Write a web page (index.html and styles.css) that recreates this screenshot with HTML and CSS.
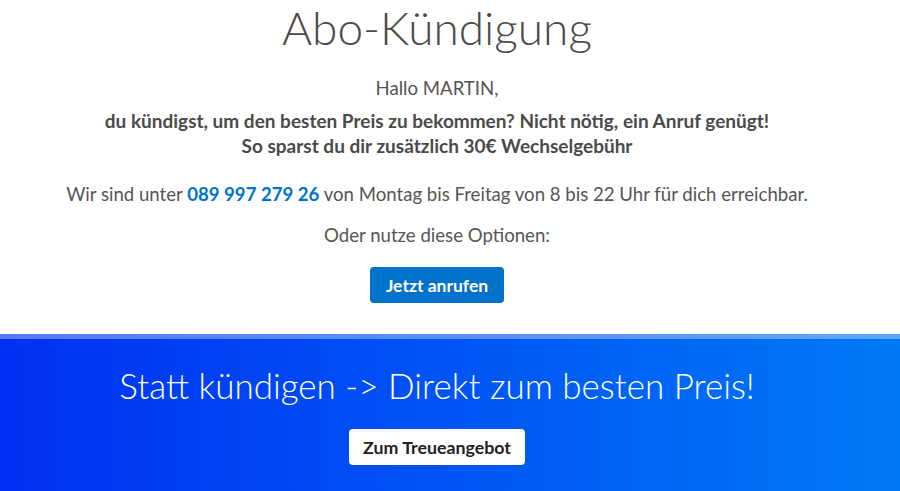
FILE: index.html
```html
<!DOCTYPE html>
<html lang="de">
<head>
<meta charset="utf-8">
<title>Abo-Kündigung</title>
<link rel="stylesheet" href="styles.css">
</head>
<body>
<main class="page">
  <section class="intro">
    <h1 class="title">Abo-Kündigung</h1>
    <p class="greeting">Hallo MARTIN,</p>
    <p class="pitch">du kündigst, um den besten Preis zu bekommen? Nicht nötig, ein Anruf genügt!<br>So sparst du dir zusätzlich 30€ Wechselgebühr</p>
    <p class="hours">Wir sind unter <a class="phone" href="#">089 997 279 26</a> von Montag bis Freitag von 8 bis 22 Uhr für dich erreichbar.</p>
    <p class="options">Oder nutze diese Optionen:</p>
    <a class="btn btn-primary" href="#">Jetzt anrufen</a>
  </section>
  <section class="offer">
    <h2 class="offer-title">Statt kündigen -&gt; Direkt zum besten Preis!</h2>
    <a class="btn btn-white" href="#">Zum Treueangebot</a>
  </section>
</main>
</body>
</html>
```
FILE: styles.css
```css
html, body {
  margin: 0;
  padding: 0;
  background: #ffffff;
}
body {
  font-family: Lato, "Open Sans", sans-serif;
  color: #4a4a4a;
}
.page {
  display: flex;
  flex-direction: column;
  min-height: 491px;
}
.intro {
  display: flex;
  flex-direction: column;
  align-items: center;
  text-align: center;
  padding: 0 26px 31px 0;
}
.title {
  margin: 0;
  font-size: 46px;
  font-weight: 300;
  line-height: 56px;
  color: #4a4a4a;
}
.greeting {
  margin: 20px 0 0;
  font-size: 18.6px;
  font-weight: 400;
  line-height: 24px;
  color: #555555;
}
.pitch {
  margin: 8px 0 0;
  font-size: 19px;
  font-weight: 700;
  line-height: 25px;
}
.hours {
  margin: 24px 0 0;
  font-size: 18.6px;
  font-weight: 400;
  line-height: 24px;
  color: #555555;
}
.phone {
  color: #0072c9;
  font-weight: 700;
  text-decoration: none;
}
.options {
  margin: 17px 0 0;
  font-size: 18.6px;
  font-weight: 400;
  line-height: 24px;
  color: #555555;
}
.btn {
  display: inline-flex;
  align-items: center;
  justify-content: center;
  height: 36px;
  border-radius: 4px;
  font-weight: 700;
  text-decoration: none;
  box-sizing: border-box;
}
.btn-primary {
  margin-top: 20px;
  width: 134px;
  font-size: 17.5px;
  background: #0072c9;
  color: #ffffff;
}
.offer {
  flex: 1;
  display: flex;
  flex-direction: column;
  align-items: center;
  text-align: center;
  background: linear-gradient(90deg, #0030f2 0%, #0079f6 100%);
  border-top: 5px solid rgba(255, 255, 255, 0.35);
  background-origin: border-box;
  padding: 24px 26px 26px 0;
}
.offer-title {
  margin: 0;
  font-size: 35px;
  font-weight: 300;
  line-height: 44px;
  color: #ffffff;
}
.btn-white {
  margin-top: 22px;
  width: 176px;
  font-size: 17.8px;
  background: #ffffff;
  color: #222222;
}
```
